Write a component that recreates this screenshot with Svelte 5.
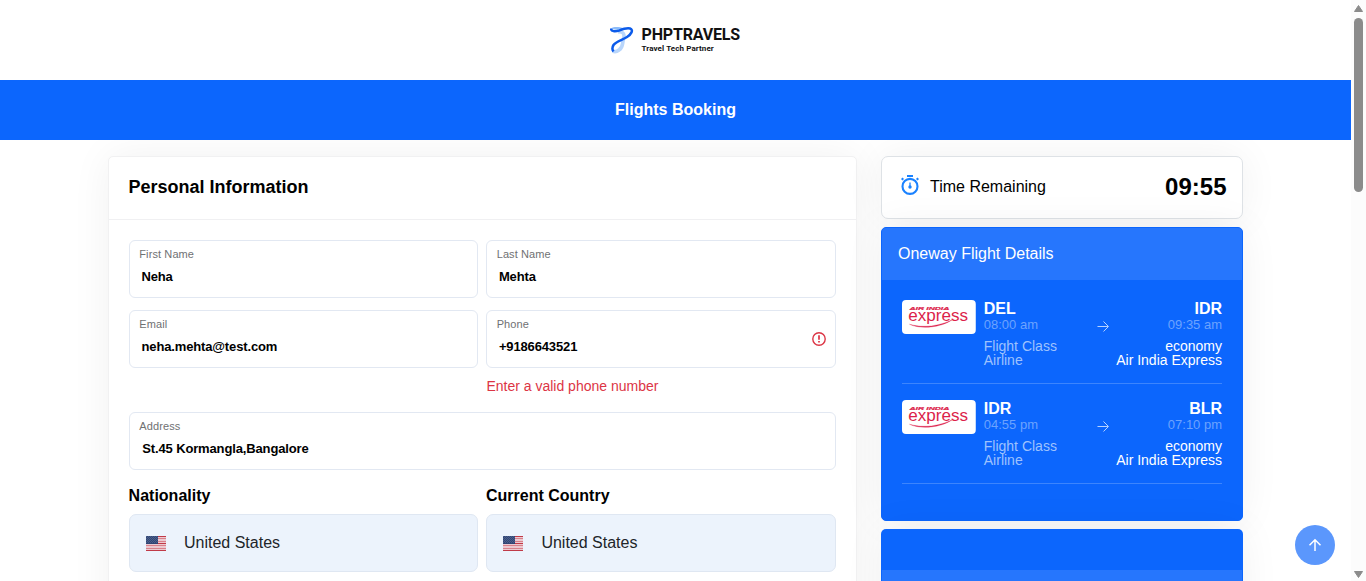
<script>
  const legs = [
    { from: 'DEL', depart: '08:00 am', to: 'IDR', arrive: '09:35 am' },
    { from: 'IDR', depart: '04:55 pm', to: 'BLR', arrive: '07:10 pm' }
  ];
  const countries = ['Nationality', 'Current Country'];
  const stripes = [0, 1, 2, 3, 4, 5, 6];
</script>

{#snippet field(label, value, invalid)}
  <div class="field">
    <span class="label">{label}</span>
    <span class="value" class:address={label === 'Address'}>{value}</span>
    {#if invalid}
      <svg class="alert" width="14" height="14" viewBox="0 0 14 14">
        <circle cx="7" cy="7" r="6.2" fill="none" stroke="#dc3545" stroke-width="1.4" />
        <path d="M7 3.3v4.4M7 9v1.6" stroke="#dc3545" stroke-width="1.7" />
      </svg>
    {/if}
  </div>
{/snippet}

<div class="window">
  <div class="page">
    <header>
      <svg class="mark" width="24" height="28" viewBox="0 0 24 28" fill="none">
        <path d="M8 6C13 5 15 8 13.500 13C12 18 13.500 21 9 24C7 25.500 4.500 26 3 25" stroke="#b9d6fb" stroke-width="3.600" />
        <path d="M1 2.500C4 .5 9 .8 14 2.500L10 4.500C6 3.500 3 3.500 1 2.500Z" fill="#8dbcf9" />
        <path d="M1 2.500C1 5.500 5 5.800 9 4.600C13 3 17 1.500 20 2.500C24 4 21 8.500 17 11C12 14 6 15.500 3.500 19C2 21.500 2 23.500 3.500 25.500" stroke="#0c5bea" stroke-width="2.500" />
      </svg>
      <div class="brand">
        <span class="name">PHPTRAVELS</span>
        <span class="tag">Travel Tech Partner</span>
      </div>
    </header>
    <div class="banner">Flights Booking</div>

    <main>
      <section class="card">
        <h3>Personal Information</h3>
        <div class="form">
          <div class="row">
            {@render field('First Name', 'Neha', false)}
            {@render field('Last Name', 'Mehta', false)}
          </div>
          <div class="row second">
            {@render field('Email', 'neha.mehta@test.com', false)}
            <div class="stack">
              {@render field('Phone', '+9186643521', true)}
              <span class="error">Enter a valid phone number</span>
            </div>
          </div>
          <div class="row third">
            {@render field('Address', 'St.45 Kormangla,Bangalore', false)}
          </div>
          <div class="row countries">
            {#each countries as title}
              <div class="stack">
                <strong>{title}</strong>
                <div class="select">
                  <svg width="20" height="15" viewBox="0 0 20 15" shape-rendering="crispEdges">
                    <rect width="20" height="15" fill="#ecc9d0" />
                    <path d="M0 .5h20M0 7.500h20M0 14.500h20" stroke="#c03a48" />
                    <path d="M0 2.500h20M0 5.500h20M0 9.500h20M0 12.500h20" stroke="#d8818b" />
                    <rect width="11.500" height="8" fill="#314674" />
                    {#each stripes as n}
                      <path d="M{n % 2} {n + .5}h11" stroke="#4a5e8b" stroke-dasharray="1 1" />
                    {/each}
                  </svg>
                  <span>United States</span>
                </div>
              </div>
            {/each}
          </div>
        </div>
      </section>

      <aside>
        <div class="timer">
          <svg width="18" height="20" viewBox="0 0 18 20" fill="none">
            <circle cx="9" cy="11.400" r="7.500" stroke="#1a82ff" stroke-width="2.100" />
            <path d="M6 1h6M2.300 3.200l-1.600 1.600M15.700 3.200l1.600 1.600" stroke="#1a82ff" stroke-width="2" />
            <path d="M9 7.500v4" stroke="#1a82ff" stroke-width="1.300" />
            <circle cx="9" cy="12" r="1.700" fill="#1a82ff" />
          </svg>
          <span>Time Remaining</span>
          <b>09:55</b>
        </div>

        <div class="flights">
          <div class="heading">Oneway Flight Details</div>
          <div class="legs">
            {#each legs as leg}
              <div class="leg">
                <svg class="airline" width="74" height="34" viewBox="0 0 74 34">
                  <rect width="74" height="34" rx="4" fill="#fff" />
                  <text x="7.500" y="9.700" textLength="40" lengthAdjust="spacingAndGlyphs" font-family="Liberation Sans" font-size="4.300" font-weight="bold" font-style="italic" fill="#dc1f4b" stroke="#dc1f4b" stroke-width=".2">AIR INDIA</text>
                  <text x="6.300" y="21" textLength="60" lengthAdjust="spacingAndGlyphs" font-family="Liberation Sans" font-size="17" fill="#dc1f4b">express</text>
                  <path d="M7.500 24.300C22 28.500 38 26 51 19.500C39 28 18 29.500 7.500 24.300Z" fill="#dc1f4b" stroke="#dc1f4b" stroke-width=".3" />
                </svg>
                <div class="side">
                  <b>{leg.from}</b>
                  <span class="time">{leg.depart}</span>
                  <span class="meta">Flight Class<br />Airline</span>
                </div>
                <svg class="arrow" width="12" height="12" viewBox="0 0 12 12" fill="none" stroke="#bcd6ff">
                  <path d="M.5 6.500h10.500M6.500 1.500l5 5-5 5" />
                </svg>
                <div class="side end">
                  <b>{leg.to}</b>
                  <span class="time">{leg.arrive}</span>
                  <span class="info">economy<br />Air India Express</span>
                </div>
              </div>
            {/each}
          </div>
        </div>
        <div class="fare"><div class="band"></div></div>
      </aside>
    </main>
  </div>

  <div class="scrollbar">
    <svg width="9" height="7" viewBox="0 0 9 7"><path d="M4.500 .5L8.500 6.500H.5Z" fill="#8b8b8b" stroke="#8b8b8b" stroke-linejoin="round" /></svg>
    <div class="thumb"></div>
    <svg class="down" width="9" height="7" viewBox="0 0 9 7"><path d="M4.500 6.500L8.500 .5H.5Z" fill="#8b8b8b" stroke="#8b8b8b" stroke-linejoin="round" /></svg>
  </div>
  <div class="top">
    <svg width="14" height="14" viewBox="0 0 14 14" fill="none" stroke="#fff" stroke-width="1.500"><path d="M7 13V2M1.500 7.200L7 1.700l5.500 5.500" /></svg>
  </div>
</div>

<style>
  :global(body) { overflow: hidden; }
  * { box-sizing: border-box; }
  .window { display: flex; height: 581px; overflow: hidden; position: relative; font: 16px/20px "Liberation Sans", Arial, sans-serif; color: #000; background: #fff; }
  .page { width: 1351px; height: 581px; overflow: hidden; }
  header { height: 80px; display: flex; padding: 26px 0 0 610px; gap: 7.5px; position: relative; z-index: 2; background: #fff; }
  .brand { display: flex; flex-direction: column; font-family: Roboto, sans-serif; color: #111; }
  .name { font-size: 16px; font-weight: 700; line-height: 18px; letter-spacing: -.17px; }
  .tag { font-size: 8px; font-weight: 700; line-height: 10px; letter-spacing: .1px; }
  .banner { height: 60px; background: #0c66fd; color: #fff; font-weight: 700; text-align: center; line-height: 59px; position: relative; z-index: 2; }
  main { display: flex; align-items: flex-start; gap: 24px; padding: 16px 108px; }
  .card { width: 749px; height: 700px; border: 1px solid #f1f1f2; border-radius: 5px; background: #fff; box-shadow: 0 0 40px rgba(0, 0, 0, .06); }
  h3 { margin: 0; height: 63px; padding: 0 19.5px; border-bottom: 1px solid #f0f0f2; font-size: 18px; line-height: 60px; }
  .form { padding: 20px 20px 0; }
  .row { display: grid; grid-template-columns: 349.4px 349.6px; gap: 8px; }
  .second { margin-top: 12px; height: 102px; }
  .third { height: 58px; grid-template-columns: 1fr; }
  .stack { display: flex; flex-direction: column; }
  .field { height: 58px; border: 1px solid #e2e8f2; border-radius: 6px; padding: 5px 9.3px 0; display: flex; flex-direction: column; position: relative; background: #fff; }
  .label { font-size: 11px; line-height: 17px; color: #6f7173; letter-spacing: .1px; }
  .value { font-size: 13px; font-weight: 700; line-height: 18px; padding: 5px 2.2px 0; letter-spacing: -.14px; }
  .value.address { padding-left: 3px; }
  .alert { position: absolute; right: 9px; top: 21px; }
  .error { color: #dc3545; font-size: 14px; line-height: 18px; margin-top: 9px; }
  .countries { margin-top: 16px; }
  strong { line-height: 20px; margin-bottom: 8px; margin-left: -.4px; }
  .select { height: 58px; border: 1px solid #dfe7f2; border-radius: 7px; background: #ecf3fc; display: flex; align-items: center; padding: 0 16px; color: #212529; }
  .select svg { margin-top: 1px; }
  .select span { margin-left: 18px; }
  aside { width: 362px; display: flex; flex-direction: column; gap: 8px; }
  .timer, .flights, .fare { border-radius: 5px; box-shadow: 0 0 40px rgba(0, 0, 0, .06); }
  .timer { height: 63px; border: 1px solid #dee2e6; border-radius: 7px; display: flex; align-items: center; padding: 0 15.5px 1px 19px; background: #fff; }
  .timer svg { margin-top: -4px; }
  .timer span { margin-left: 11px; }
  .timer b { margin-left: auto; font-size: 24px; }
  .flights { height: 294px; background: #0c66fd; color: #fff; overflow: hidden; border: 1px solid #0c66fd; }
  .heading { height: 52px; background: #2676fd; line-height: 52px; padding-left: 16px; }
  .legs { padding: 20px 20px 0; }
  .leg { height: 84px; border-bottom: 1px solid #3d85fd; margin-bottom: 16px; display: flex; align-items: flex-start; }
  .side { display: flex; flex-direction: column; margin-left: 8px; width: 114px; }
  .side b { line-height: 17px; }
  .side.end { margin-left: auto; text-align: right; width: 113px; }
  .time { font-size: 13px; line-height: 14px; padding-top: 1px; color: #6da3fe; }
  .meta, .info { font-size: 14px; line-height: 14px; margin-top: 7px; white-space: nowrap; }
  .meta { color: #9ec2fe; }
  .arrow { margin-top: 20px; }
  .fare { height: 200px; background: #0c66fd; padding: 41px 1px 0; }
  .band { height: 100px; background: #2676fd; }
  .scrollbar { width: 15px; height: 581px; background: #fcfcfc; display: flex; flex-direction: column; align-items: center; padding: 5px 0 3px; position: relative; z-index: 3; }
  .thumb { width: 9px; height: 174px; border-radius: 5px; background: #8b8b8b; margin-top: 6px; }
  .down { margin-top: auto; }
  .top { position: absolute; left: 1295px; top: 525px; width: 40px; height: 40px; border-radius: 50%; background: #5b97fc; display: flex; align-items: center; justify-content: center; }
</style>
